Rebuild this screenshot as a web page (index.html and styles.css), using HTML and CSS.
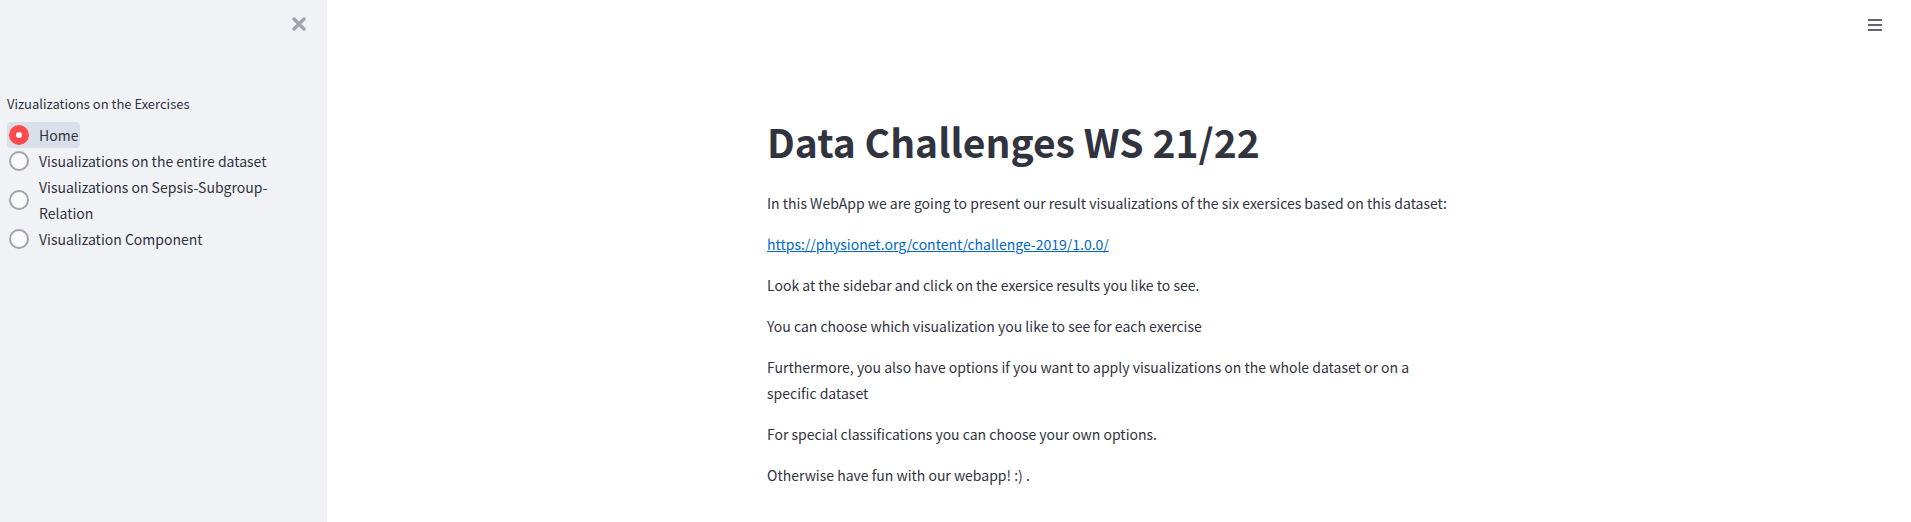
FILE: index.html
```html
<!DOCTYPE html>
<html lang="en">
<head>
  <meta charset="utf-8">
  <title>Data Challenges WS 21/22</title>
  <link rel="stylesheet" href="styles.css">
</head>
<body>
  <div class="app">
    <aside class="sidebar">
      <div class="sidebar-top">
        <button class="icon-button" type="button" aria-label="Close sidebar">
          <svg class="close-icon" viewBox="0 0 14 14" aria-hidden="true"><path d="M2 2l10 10M12 2L2 12"/></svg>
        </button>
      </div>
      <fieldset class="nav">
        <legend class="nav-title">Vizualizations on the Exercises</legend>
        <div class="options">
          <label class="option option-active"><input class="radio" type="radio" name="page" checked><span>Home</span></label>
          <label class="option"><input class="radio" type="radio" name="page"><span>Visualizations on the entire dataset</span></label>
          <label class="option"><input class="radio" type="radio" name="page"><span>Visualizations on Sepsis-Subgroup-Relation</span></label>
          <label class="option"><input class="radio" type="radio" name="page"><span>Visualization Component</span></label>
        </div>
      </fieldset>
    </aside>
    <div class="view">
      <header class="toolbar">
        <button class="icon-button" type="button" aria-label="Main menu">
          <svg class="menu-icon" viewBox="0 0 14 14" aria-hidden="true"><path d="M0 2h14M0 7h14M0 12h14"/></svg>
        </button>
      </header>
      <main class="content">
        <h1 class="title">Data Challenges WS 21/22</h1>
        <p>In this WebApp we are going to present our result visualizations of the six exersices based on this dataset:</p>
        <p><a class="link" href="https://physionet.org/content/challenge-2019/1.0.0/">https://physionet.org/content/challenge-2019/1.0.0/</a></p>
        <p>Look at the sidebar and click on the exersice results you like to see.</p>
        <p>You can choose which visualization you like to see for each exercise</p>
        <p>Furthermore, you also have options if you want to apply visualizations on the whole dataset or on a specific dataset</p>
        <p>For special classifications you can choose your own options.</p>
        <p>Otherwise have fun with our webapp! :) .</p>
      </main>
    </div>
  </div>
</body>
</html>
```
FILE: styles.css
```css
* {
  box-sizing: border-box;
}

body {
  margin: 0;
  background: #fff;
  color: #31333f;
  font-family: "Source Sans Pro", "Noto Sans CJK SC", sans-serif;
  font-size: 14px;
  line-height: 26px;
}

.app {
  display: flex;
  min-height: 100vh;
}

.sidebar {
  flex: 0 0 327px;
  padding: 0 16px 0 7px;
  background: #f0f2f6;
}

.sidebar-top {
  display: flex;
  justify-content: flex-end;
  height: 91px;
  padding-top: 16px;
}

.icon-button {
  display: block;
  width: 24px;
  height: 16px;
  padding: 0;
  border: 0;
  background: none;
  cursor: pointer;
}

.close-icon,
.menu-icon {
  display: block;
  width: 14px;
  height: 14px;
  margin: auto;
  fill: none;
}

.close-icon {
  stroke: #a3a4ab;
  stroke-width: 3.4;
  stroke-linecap: round;
}

.menu-icon {
  stroke: #31333f;
  stroke-width: 1.7;
}

.nav {
  margin: 0;
  padding: 0;
  border: 0;
}

.nav-title {
  padding: 0 0 5px;
  font-size: 13px;
}

.options {
  display: flex;
  flex-direction: column;
  align-items: flex-start;
}

.option {
  display: flex;
  align-items: center;
  gap: 10px;
  padding: 0 2px;
  border-radius: 4px;
  cursor: pointer;
}

.option-active {
  background: #d9e0ea;
}

.radio {
  flex: none;
  width: 20px;
  height: 20px;
  margin: 0;
  appearance: none;
  border: 2px solid #a3a4ab;
  border-radius: 50%;
  background: #fafafc;
}

.radio:checked {
  border: 7px solid #ff4b4b;
}

.view {
  flex: 1;
  min-width: 0;
}

.toolbar {
  display: flex;
  justify-content: flex-end;
  height: 56px;
  padding: 17px 24px 0 0;
}

.content {
  max-width: 736px;
  margin: 0 auto;
  padding: 58px 32px 32px 16px;
}

.title {
  margin: 0 0 22px;
  font-size: 39px;
  font-weight: 700;
  line-height: 54px;
}

.content p {
  margin: 0 0 15px;
}

.link {
  color: #0068c9;
}
```
